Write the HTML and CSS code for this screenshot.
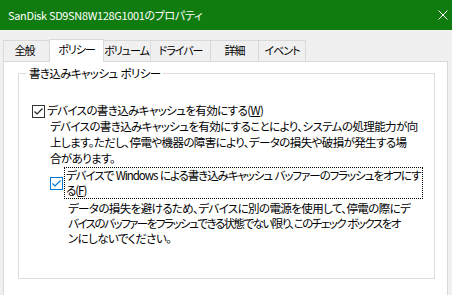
FILE: index.html
```html
<!DOCTYPE html>
<html lang="ja">
<head>
<meta charset="utf-8">
<link rel="stylesheet" href="styles.css">
</head>
<body>
<div class="window">
  <div class="titlebar">
    <span class="title">SanDisk SD9SN8W128G1001のプロパティ</span>
    <svg class="close" width="10" height="10" viewBox="0 0 10 10"><path d="M0.5 0.5 L9.5 9.5 M9.5 0.5 L0.5 9.5" stroke="#fff" stroke-width="1" fill="none"/></svg>
  </div>
  <div class="tabs">
    <div class="tab t1">全般</div>
    <div class="tab t2 active">ポリシー</div>
    <div class="tab t3">ボリューム</div>
    <div class="tab t4">ドライバー</div>
    <div class="tab t5">詳細</div>
    <div class="tab t6">イベント</div>
  </div>
  <div class="panel">
    <fieldset class="group">
      <legend>書き込みキャッシュ ポリシー</legend>
      <div class="opt opt1">
        <svg class="cb" width="13" height="13" viewBox="0 0 13 13"><rect x="0.5" y="0.5" width="12" height="12" fill="#fff" stroke="#333"/><path d="M2.5 6.5 L5 9 L10.5 3.5" stroke="#222" stroke-width="1.2" fill="none"/></svg>
        <span class="label">デバイスの書き込みキャッシュを有効にする(<u>W</u>)</span>
      </div>
      <p class="desc desc1">デバイスの書き込みキャッシュを有効にすることにより、システムの処理能力が向<br>上します。ただし、停電や機器の障害により、データの損失や破損が発生する場<br>合があります。</p>
      <div class="opt opt2">
        <svg class="cb" width="13" height="13" viewBox="0 0 13 13"><rect x="0.5" y="0.5" width="12" height="12" fill="#fff" stroke="#0078d7"/><path d="M2.5 6.5 L5 9 L10.5 3.5" stroke="#0078d7" stroke-width="1.2" fill="none"/></svg>
        <span class="label focus">デバイスで Windows による書き込みキャッシュ バッファーのフラッシュをオフにす<br>る(<u>F</u>)</span>
      </div>
      <p class="desc desc2">データの損失を避けるため、デバイスに別の電源を使用して、停電の際にデ<br><span class="tight">バイスのバッファーをフラッシュできる状態でない限り、このチェック ボックスをオ</span><br>ンにしないでください。</p>
    </fieldset>
  </div>
</div>
</body>
</html>
```

FILE: styles.css
```css
* { box-sizing: border-box; }
html, body {
  margin: 0;
  padding: 0;
}
body {
  width: 452px;
  height: 295px;
  overflow: hidden;
  background: #f0f0f0;
  font-family: "Noto Sans CJK JP", "Noto Sans", sans-serif;
  font-size: 11.5px;
  letter-spacing: -0.6px;
  word-spacing: 1px;
  font-feature-settings: "palt";
  color: #000;
}
.window {
  display: flex;
  flex-direction: column;
  height: 295px;
}
.titlebar {
  height: 30px;
  background: #107c10;
  color: #fff;
  display: flex;
  align-items: center;
  justify-content: space-between;
  padding: 0 4px 0 8px;
  flex: none;
}
.title {
  font-size: 11px;
  letter-spacing: -0.35px;
  word-spacing: 0;
  line-height: 16px;
  white-space: nowrap;
}
.close { display: block; }
.tabs {
  display: flex;
  align-items: flex-end;
  margin: 9px 0 0 3px;
  height: 22px;
  flex: none;
  position: relative;
  z-index: 1;
}
.tab {
  height: 21px;
  border: 1px solid #d9d9d9;
  border-bottom: none;
  margin-left: -1px;
  padding: 0;
  line-height: 19px;
  text-align: center;
  white-space: nowrap;
  font-size: 11px;
  letter-spacing: -1px;
  background: #f0f0f0;
}
.tab:first-child { margin-left: 0; }
.t1 { width: 49px; padding-right: 6px; }
.t2 { width: 51px; }
.t3 { width: 49px; }
.t4 { width: 61px; }
.t5 { width: 49px; }
.t6 { width: 48px; }
.tab.active {
  height: 23px;
  background: #fff;
  margin: 0 -2px -1px -3px;
  width: 55px;
  position: relative;
  z-index: 2;
  line-height: 18px;
}
.tab.active + .tab { margin-left: 0; }
.panel {
  flex: 1;
  margin: 0 4px 0 3px;
  background: #fff;
  border: 1px solid #d9d9d9;
  border-bottom: none;
  padding: 3px 12px 0 14px;
}
.group {
  margin: 0;
  border: 1px solid #dcdcdc;
  padding: 0 4px 0 13px;
  height: 214px;
  min-width: 0;
}
.group legend {
  padding: 0 2px;
  margin-left: -5px;
  line-height: 16px;
  white-space: nowrap;
}
.opt {
  display: flex;
  align-items: flex-start;
}
.opt1 {
  margin-top: 21px;
}
.opt1 .cb { margin-top: 3px; flex: none; }
.opt1 .label {
  margin-left: 2px;
  line-height: 17px;
  white-space: nowrap;
}
.desc {
  margin: 0;
  white-space: nowrap;
}
.desc1 {
  padding-left: 18px;
  line-height: 16px;
  margin-top: -1px;
}
.opt2 {
  margin-top: 1px;
  margin-left: 18px;
}
.opt2 .cb { margin-top: 10px; flex: none; }
.focus {
  margin-left: 1px;
  border: 1px dotted #000;
  padding: 0 1px;
  line-height: 15px;
  width: 359px;
  letter-spacing: -1.05px;
  white-space: nowrap;
}
.desc2 {
  padding-left: 36px;
  line-height: 15px;
  margin-top: 2px;
}
.tight {
  letter-spacing: -1.5px;
}
```
